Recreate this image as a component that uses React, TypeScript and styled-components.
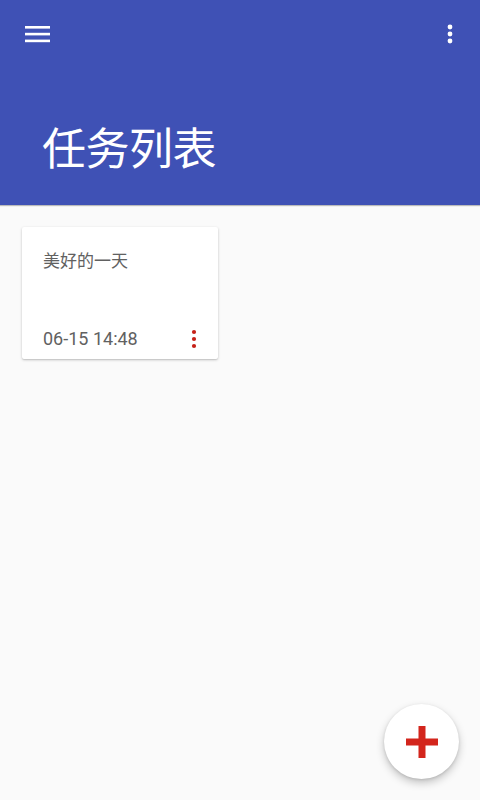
import React from 'react';
import styled, { createGlobalStyle } from 'styled-components';

const GlobalStyle = createGlobalStyle`
  html, body {
    margin: 0;
    padding: 0;
    background: #fafafa;
  }
  body {
    font-family: Roboto, "Noto Sans CJK SC", sans-serif;
  }
`;

const Page = styled.div`
  position: relative;
  width: 480px;
  height: 800px;
  display: flex;
  flex-direction: column;
  background: #fafafa;
  overflow: hidden;
`;

const Header = styled.header`
  height: 205px;
  background: #3f51b5;
  box-shadow: 0 1px 1px rgba(0, 0, 0, 0.25);
  display: flex;
  flex-direction: column;
  flex-shrink: 0;
`;

const Toolbar = styled.div`
  height: 68px;
  display: flex;
  align-items: center;
  justify-content: space-between;
  padding: 0 24px 0 25px;
`;

const IconButton = styled.button`
  background: none;
  border: none;
  padding: 0;
  display: flex;
  align-items: center;
  justify-content: center;
  cursor: pointer;
`;

const Title = styled.h1`
  margin: 56px 0 0 42px;
  font-size: 44px;
  font-weight: 400;
  line-height: 52px;
  color: #fff;
  letter-spacing: -0.5px;
`;

const List = styled.div`
  display: grid;
  grid-template-columns: 196px;
  padding: 22px;
  gap: 16px;
`;

const Card = styled.div`
  height: 132px;
  background: #fff;
  border-radius: 2px;
  box-shadow: 0 1px 3px rgba(0, 0, 0, 0.2), 0 1px 1px rgba(0, 0, 0, 0.08);
  display: flex;
  flex-direction: column;
  justify-content: space-between;
  padding: 20px 18px 8px 21px;
  box-sizing: border-box;
`;

const CardTitle = styled.div`
  font-size: 17px;
  line-height: 28px;
  color: #616161;
`;

const CardFooter = styled.div`
  display: flex;
  align-items: center;
  justify-content: space-between;
`;

const CardDate = styled.span`
  font-size: 18px;
  line-height: 24px;
  color: #616161;
`;

const Fab = styled.button`
  position: absolute;
  right: 21px;
  bottom: 21px;
  width: 75px;
  height: 75px;
  border-radius: 50%;
  border: none;
  background: #fff;
  box-shadow: 0 4px 8px rgba(0, 0, 0, 0.22), 0 1px 3px rgba(0, 0, 0, 0.12);
  display: flex;
  align-items: center;
  justify-content: center;
  cursor: pointer;
`;

const MenuIcon = () => (
  <svg width="26" height="20" viewBox="0 0 26 20">
    <rect x="0" y="2" width="25" height="2.6" fill="#fff" />
    <rect x="0" y="8.8" width="25" height="2.6" fill="#fff" />
    <rect x="0" y="15.6" width="25" height="2.6" fill="#fff" />
  </svg>
);

const DotsIcon = ({ color, r }: { color: string; r: number }) => (
  <svg width="12" height="22" viewBox="0 0 12 22">
    <circle cx="6" cy="4" r={r} fill={color} />
    <circle cx="6" cy="11" r={r} fill={color} />
    <circle cx="6" cy="18" r={r} fill={color} />
  </svg>
);

const PlusIcon = () => (
  <svg width="34" height="34" viewBox="0 0 34 34">
    <rect x="1" y="13.5" width="32" height="7" fill="#d3251c" />
    <rect x="13.5" y="1" width="7" height="32" fill="#d3251c" />
  </svg>
);

const tasks = [{ title: '美好的一天', time: '06-15 14:48' }];

export default function App() {
  return (
    <Page>
      <GlobalStyle />
      <Header>
        <Toolbar>
          <IconButton aria-label="menu">
            <MenuIcon />
          </IconButton>
          <IconButton aria-label="more">
            <DotsIcon color="#fff" r={2.4} />
          </IconButton>
        </Toolbar>
        <Title>任务列表</Title>
      </Header>
      <List>
        {tasks.map((t) => (
          <Card key={t.time}>
            <CardTitle>{t.title}</CardTitle>
            <CardFooter>
              <CardDate>{t.time}</CardDate>
              <IconButton aria-label="options">
                <DotsIcon color="#c62017" r={2.1} />
              </IconButton>
            </CardFooter>
          </Card>
        ))}
      </List>
      <Fab aria-label="add">
        <PlusIcon />
      </Fab>
    </Page>
  );
}
